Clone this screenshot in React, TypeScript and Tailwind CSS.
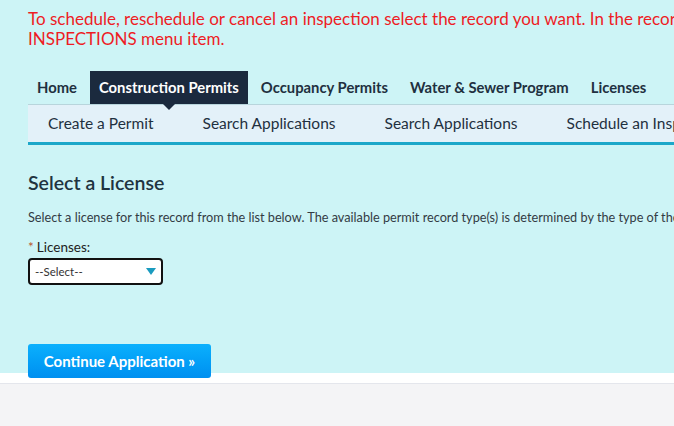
export default function App() {
  const tabs = ['Home', 'Construction Permits', 'Occupancy Permits', 'Water & Sewer Program', 'Licenses']
  const subs = ['Create a Permit', 'Search Applications', 'Search Applications', 'Schedule an Inspection']

  return (
    <div className="w-[674px] h-[426px] overflow-hidden bg-[#f4f5f7] font-['Lato',sans-serif]">
      {/* main cyan area */}
      <div className="w-[980px] h-[373px] bg-[#cdf4f6] pl-[28px] pt-[9px]">
        <p className="text-[17px] leading-[20px] text-[#ee1c25] whitespace-nowrap">
          To schedule, reschedule or cancel an inspection select the record you want. In the record, click the
          <br />
          INSPECTIONS menu item.
        </p>

        {/* top nav */}
        <div className="mt-[22px] flex gap-[4px] h-[33px] items-stretch">
          {tabs.map((t, i) => (
            <div
              key={t + i}
              className={
                i === 1
                  ? 'relative px-[9px] flex items-center bg-[#1b2a3e] text-white text-[14.8px] font-bold'
                  : 'px-[9px] flex items-center text-[#1f3040] text-[14.8px] font-bold'
              }
            >
              {t}
              {i === 1 && (
                <span className="absolute left-1/2 -translate-x-1/2 top-full w-0 h-0 border-l-[6px] border-r-[6px] border-t-[6px] border-l-transparent border-r-transparent border-t-[#1b2a3e] z-10" />
              )}
            </div>
          ))}
        </div>

        {/* sub nav */}
        <div className="h-[41px] bg-[#e3f1f9] border-t border-[#b8d5dc] border-b-[3px] border-b-[#1ca7c9] flex items-center pl-[20px] gap-[49px]">
          {subs.map((s, i) => (
            <span key={i} className="text-[15.5px] text-[#1f3040] whitespace-nowrap">
              {s}
            </span>
          ))}
        </div>

        <h2 className="mt-[25px] text-[19.5px] font-semibold text-[#1f3340] leading-[25px]">Select a License</h2>
        <p className="mt-[13px] text-[12.7px] text-[#333b44] whitespace-nowrap">
          Select a license for this record from the list below. The available permit record type(s) is determined by the type of the license selected.
        </p>

        <div className="mt-[12px] text-[13.5px] text-[#222] leading-[16px] flex items-center gap-[3px]">
          <span className="text-[#b8542e]">*</span>
          <span>Licenses:</span>
        </div>
        <div className="mt-[3px] w-[135px] h-[27px] bg-white border-2 border-[#111] rounded-[4px] flex items-center justify-between pl-[5px] pr-[5px]">
          <span className="text-[11.5px] text-[#333]">--Select--</span>
          <svg width="10" height="7" viewBox="0 0 10 7">
            <path d="M0 0 L10 0 L5 7 Z" fill="#1a9bbf" />
          </svg>
        </div>

        <button className="relative z-10 mt-[59px] w-[183px] h-[34px] rounded-[3px] bg-gradient-to-b from-[#0cb0fd] to-[#008ff0] text-white text-[15px] font-bold">
          Continue Application »
        </button>
      </div>

      {/* footer */}
      <div className="h-[10px] bg-white" />
      <div className="border-t border-[#e4e6ec] bg-[#f4f4f6] h-[60px]" />
    </div>
  )
}
